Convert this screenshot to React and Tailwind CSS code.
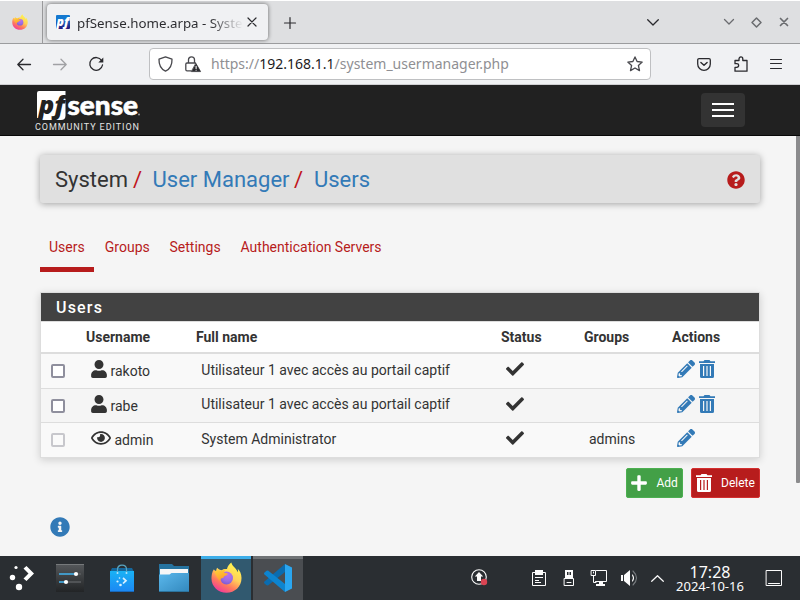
import React from "react";
import {
  FaUser,
  FaRegEye,
  FaCheck,
  FaPencilAlt,
  FaPlus,
  FaInfoCircle,
  FaQuestionCircle,
} from "react-icons/fa";

function Svg({ w = 16, h = 16, vb, className = "", children }) {
  return (
    <svg
      width={w}
      height={h}
      viewBox={vb || `0 0 ${w} ${h}`}
      className={`block shrink-0 overflow-visible ${className}`}
      fill="none"
      stroke="currentColor"
      strokeLinecap="round"
      strokeLinejoin="round"
    >
      {children}
    </svg>
  );
}

function Trash() {
  return (
    <Svg w={16} h={18}>
      <path
        fillRule="evenodd"
        stroke="none"
        fill="currentColor"
        d="M0 1.200H4.500L5.500 0H10.500L11.500 1.200H16V3H0ZM1 4H15V16.500Q15 18 13.500 18H2.500Q1 18 1 16.500ZM4 6V16H5.200V6ZM7.400 6V16H8.600V6ZM10.800 6V16H12V6Z"
      />
    </Svg>
  );
}

function Firefox({ size, id }) {
  return (
    <svg width={size} height={size} viewBox="0 0 32 32" className="block shrink-0">
      <defs>
        <linearGradient id={`${id}a`} x1="0.8" y1="0.1" x2="0.3" y2="1">
          <stop offset="0" stopColor="#fff44f" />
          <stop offset="0.4" stopColor="#ffd05a" />
          <stop offset="0.7" stopColor="#ff7a5c" />
          <stop offset="1" stopColor="#f0389c" />
        </linearGradient>
        <radialGradient id={`${id}b`} cx="0.6" cy="0.25" r="0.8">
          <stop offset="0" stopColor="#b972ee" />
          <stop offset="0.6" stopColor="#9a6ce4" />
          <stop offset="1" stopColor="#7a58d0" />
        </radialGradient>
        <linearGradient id={`${id}c`} x1="0.2" y1="0" x2="0.6" y2="1">
          <stop offset="0" stopColor="#ffcf3a" />
          <stop offset="1" stopColor="#ff9a2a" />
        </linearGradient>
      </defs>
      <path
        d="M21 .5C19 2 17 4.500 16.500 7.300C14 7 12.500 7.500 11 8.500C9.500 8.500 7.500 7.500 6.500 6C5.500 7 5.300 8.300 5.500 9.700C4.500 9.500 3.500 8.500 3 7.500C1 10 .5 14 .5 17C.5 25.500 7.500 31.700 16 31.700C24.500 31.700 31.500 25.500 31.500 16.500C31.500 12 29.500 8.500 27.500 7C28 8.500 28 9.500 27.700 10.500C26 6 22 5 21 .5Z"
        fill={`url(#${id}a)`}
      />
      <circle cx="16" cy="16.500" r="6.700" fill={`url(#${id}b)`} />
      <path
        d="M3.500 9.700C7 8.200 9.500 8.300 11 9.300C12 8 14 7.500 15.500 7.800C14 8.700 13.500 10 13.700 11.200C14.500 11.700 16.500 11.700 17.300 12C17 13.500 15 13.800 14 14.500C13 15.300 13.300 16.300 12 16.500C10.500 16.500 9.500 17.500 9.800 19.500C7 18 5 13.500 3.500 9.700Z"
        fill={`url(#${id}c)`}
      />
    </svg>
  );
}

function Vscode() {
  return (
    <svg width="28" height="28" viewBox="0 0 28 28" className="block shrink-0">
      <path d="M21 0V8L4 21.500 2.500 21.200 0 19 .2 17.800Z" fill="#0a6cb0" />
      <path d="M21 28V20L4 6.500 2.500 6.800 0 9 .2 10.200Z" fill="#0d84cf" />
      <path d="M21 0V28L28 24.500V3.500Z" fill="#2aa6f0" />
    </svg>
  );
}

function TabStrip() {
  return (
    <div className="flex h-[44px] items-stretch border-t border-b border-t-white border-b-[#9b9c9e] bg-[#dedfe1] text-[#2a2a2e]">
      <div className="flex w-[43px] items-center border-r border-[#9a9a9c] pl-[12px]">
        <Firefox size={16} id="s" />
      </div>
      <div className="mt-[3px] ml-[4px] flex h-[36px] w-[221px] items-center rounded-[4px] bg-[#f0f1f3] pl-[9px] shadow-[0_0_4px_rgba(0,0,0,0.55)]">
        <svg width="14" height="14" viewBox="0 0 14 14" className="block shrink-0">
          <defs>
            <linearGradient id="fav" x1="0" y1="0" x2="0" y2="1">
              <stop offset="0.3" stopColor="#1579d0" />
              <stop offset="1" stopColor="#241478" />
            </linearGradient>
          </defs>
          <rect width="14" height="14" rx="1" fill="url(#fav)" />
          <text x="0.500" y="10.500" fontFamily="Open Sans" fontWeight="800" fontStyle="italic" fontSize="12" textLength="12.500" lengthAdjust="spacingAndGlyphs" fill="#fff">pf</text>
        </svg>
        <span className="mt-[3px] ml-[7px] w-[166px] overflow-hidden bg-gradient-to-r from-[#2a2a2e] from-80% to-transparent to-100% bg-clip-text font-['Noto_Sans',sans-serif] text-[13.300px] whitespace-nowrap text-transparent">
          pfSense.home.arpa - Syste
        </span>
        <Svg w={10} h={10} className="ml-[4px]">
          <path d="M1 1 9 9M9 1 1 9" strokeWidth="1.200" />
        </Svg>
      </div>
      <Svg w={12} h={12} className="mt-[16px] ml-[15.500px]">
        <path d="M6 .5V11.500M.5 6H11.500" strokeWidth="1.200" />
      </Svg>
      <div className="ml-auto flex items-center pr-[10px]">
        <Svg w={12} h={7} className="mr-[65px]">
          <path d="M.7.7 6 6 11.300.7" strokeWidth="1.300" />
        </Svg>
        <Svg w={10} h={6} className="mr-[17px] text-[#6a6c6f]">
          <path d="M.5.5 5 5 9.500.5" strokeWidth="1.300" />
        </Svg>
        <Svg w={11} h={11} className="mr-[17px] text-[#6a6c6f]">
          <path d="M5.500 1 10 5.500 5.500 10 1 5.500Z" strokeWidth="1.500" />
        </Svg>
        <Svg w={10} h={10} className="mr-[1px] text-[#6a6c6f]">
          <path d="M1.500 1.500 8.500 8.500M8.500 1.500 1.500 8.500" strokeWidth="1.700" />
        </Svg>
      </div>
    </div>
  );
}

function Toolbar() {
  return (
    <div className="flex h-[41px] items-center border-b border-[#cfcfd2] bg-[#f0f1f3] pl-[17px] text-[#2a2a2e]">
      <Svg w={14} h={12}>
        <path d="M13.500 6.500H.8M6 1.300.8 6.500 6 11.700" strokeWidth="1.300" />
      </Svg>
      <Svg w={14} h={12} className="ml-[22px] text-[#a0a1a4]">
        <path d="M.5 6.500H13.200M8 1.300 13.200 6.500 8 11.700" strokeWidth="1.300" />
      </Svg>
      <Svg w={15} h={15} className="mt-px ml-[22px]">
        <path d="M12.600 3.500A6.400 6.400 0 1 0 13.500 8" strokeWidth="1.300" />
        <path d="M14.300.5V5.500H9.300Z" fill="currentColor" stroke="none" />
      </Svg>
      <div className="ml-[45px] flex h-[32px] w-[502px] items-center rounded-[4px] border border-[#bfc0c2] bg-white pl-[7.500px]">
        <Svg w={15} h={16} className="text-[#48484d]">
          <path
            d="M7.500.8 14 3.200C14.200 8.500 12 13 7.500 15.200 3 13 .8 8.500 1 3.200Z"
            strokeWidth="1.300"
          />
        </Svg>
        <Svg w={16} h={16} className="ml-[12px] text-[#48484d]">
          <path d="M3.500 7V3.800A3 3 0 0 1 9.500 3.800V7M6 14.800H2A1.200 1.200 0 0 1 .8 13.600V8.200A1.200 1.200 0 0 1 2 7H10.500" strokeWidth="1.300" />
          <path d="M11 7.600 15.600 15.600H6.600Z" fill="#2a2a2e" stroke="#2a2a2e" strokeWidth=".7" />
          <path d="M11.100 10.200V12.600M11.100 14.200V14.300" stroke="#fff" strokeWidth="1.100" />
        </Svg>
        <span className="ml-[10.500px] pb-[2px] font-['Noto_Sans',sans-serif] text-[14px] whitespace-nowrap text-[#8f8f93]">
          https://<span className="text-[#1c1b22]">192.168.1.1</span>/system_usermanager.php
        </span>
        <Svg w={16} h={16} className="mr-[7px] ml-auto text-[#48484d]">
          <path
            d="M8 .9 10.100 5.500 15.200 6.100 11.400 9.500 12.500 14.600 8 12 3.500 14.600 4.600 9.500.8 6.100 5.900 5.500Z"
            strokeWidth="1.300"
          />
        </Svg>
      </div>
      <Svg w={14} h={13} className="ml-[46px]">
        <path d="M2 .7H12A1.300 1.300 0 0 1 13.300 2V6A6.300 6.300 0 0 1 .7 6V2A1.300 1.300 0 0 1 2 .7Z" strokeWidth="1.300" />
        <path d="M3.900 4.400 7 7.300 10.100 4.400" strokeWidth="1.400" />
      </Svg>
      <Svg w={14} h={16} className="ml-[22.500px]">
        <path
          d="M1 4.500H5V3C5 .2 8.800.2 8.800 3V4.500H13V15.200H1V11.300H2.700C5.300 11.300 5.300 7.700 2.700 7.700H1Z"
          strokeWidth="1.300"
        />
      </Svg>
      <Svg w={12} h={10} className="ml-[22.500px]">
        <path d="M.5.5H11.500M.5 4.500H11.500M.5 9.500H11.500" strokeWidth="1.100" />
      </Svg>
    </div>
  );
}

function SiteHeader() {
  return (
    <header className="flex h-[51px] items-start justify-between border-b border-[#080808] bg-[#212121] pr-[55px] pl-[35px]">
      <div className="pt-[5px]">
        <svg width="108" height="32" viewBox="0 0 108 32" className="block">
          <path d="M4 1H30.500V25.500Q30.500 30 26 30H5V28H2V3Q2 1 4 1Z" fill="#fff" />
          <text x="3.500" y="23.500" fontFamily="Open Sans" fontWeight="800" fontStyle="italic" fontSize="25" textLength="26.500" lengthAdjust="spacingAndGlyphs" fill="#212121">pf</text>
          <text x="32.500" y="24.500" fontFamily="Lato" fontWeight="900" fontSize="27" textLength="70.500" lengthAdjust="spacingAndGlyphs" fill="#fff" stroke="#fff" strokeWidth=".6">sense</text>
          <circle cx="104" cy="24.500" r="1" fill="#999" />
        </svg>
        <div className="font-[Roboto,sans-serif] text-[9px] leading-[10px] tracking-[0.920px] whitespace-nowrap text-[#e4e4e4]">
          COMMUNITY EDITION
        </div>
      </div>
      <button className="mt-[8px] flex h-[34px] w-[44px] flex-col items-center justify-center gap-[4px] rounded-[4px] bg-[#333333]">
        <span className="h-[2px] w-[22px] bg-white" />
        <span className="h-[2px] w-[22px] bg-white" />
        <span className="h-[2px] w-[22px] bg-white" />
      </button>
    </header>
  );
}

const users = [
  { name: "rakoto", full: "Utilisateur 1 avec accès au portail captif", groups: "" },
  { name: "rabe", full: "Utilisateur 1 avec accès au portail captif", groups: "" },
  { name: "admin", full: "System Administrator", groups: "admins", system: true },
];

const COLS = "grid grid-cols-[45px_110px_305px_83px_88px_1fr]";

const ROW_STYLES = [
  "h-[34px]",
  "h-[34px] border-t border-[#dddddd] bg-[#f5f5f5]",
  "h-[35px] border-t border-[#dddddd]",
];

function UserTable() {
  return (
    <section className="mt-[20px] h-[166px] border border-[#dddddd] bg-[#f9f9f9] shadow-[0_2px_8px_rgba(0,0,0,0.16)]">
      <h2 className="h-[28px] bg-[#424242] pl-[15px] text-[16px] leading-[29px] font-medium tracking-[1.200px] text-white">
        Users
      </h2>
      <div className={`${COLS} h-[33px] border-t border-b-2 border-[#dddddd] bg-white text-[14px] leading-[30px] font-bold`}>
        <span />
        <span>Username</span>
        <span>Full name</span>
        <span>Status</span>
        <span>Groups</span>
        <span>Actions</span>
      </div>
      {users.map((u, i) => (
        <div key={u.name} className={`${COLS} text-[14px] ${ROW_STYLES[i]}`}>
          <span className="pt-[10px] pl-[10px]">
            <span className={`block h-[14px] w-[14px] rounded-[2px] border-2 ${u.system ? "border-[#c7c7cc] bg-[#fafafa]" : "border-[#8f8f9d] bg-white"}`} />
          </span>
          <span className="flex items-start pl-[5px]">
            {u.system ? (
              <FaRegEye className="mt-[6px] h-[18px] w-[20px]" />
            ) : (
              <FaUser className="mt-[6px] h-[18px] w-[16px]" />
            )}
            <span className="ml-[3.500px] leading-[34px]">{u.name}</span>
          </span>
          <span className={`pl-[5.300px] ${i === 1 ? "leading-[30px]" : "leading-[32px]"}`}>{u.full}</span>
          <span className="pt-[6px] pl-[5px]">
            <FaCheck className="h-[18px] w-[18px]" />
          </span>
          <span className="pl-[5px] leading-[32px]">{u.groups}</span>
          <span className="flex gap-[4px] pt-[6px] pl-[5px] text-[#337ab7]">
            <FaPencilAlt className="h-[18px] w-[18px]" />
            {!u.system && <Trash />}
          </span>
        </div>
      ))}
    </section>
  );
}

function Page() {
  return (
    <div className="flex h-[420px] bg-[#f5f5f5] font-[Roboto,sans-serif] text-[#333333]">
      <main className="ml-[40px] w-[720px] pt-[19px]">
        <div className="flex h-[48px] items-center rounded-[3px] bg-[#e0e0e0] pr-[15px] pl-[15px] text-[22px] shadow-[0_1px_7px_rgba(0,0,0,0.35)]">
          <span>System</span>
          <span className="ml-[5px] text-[#c1141b]">/</span>
          <span className="ml-[10.500px] text-[#337ab7]">User Manager</span>
          <span className="ml-[4.500px] text-[#c1141b]">/</span>
          <span className="ml-[10.800px] text-[#337ab7]">Users</span>
          <FaQuestionCircle className="mt-[1px] ml-auto h-[18px] w-[18px] text-[#b71c1c]" />
        </div>
        <nav className="mt-[26px] flex h-[43px] text-[14px] leading-[36px] text-[#b71c1c]">
          <span className="w-[54px] border-b-[5px] border-[#b71c1c] pl-[9px]">Users</span>
          <span className="ml-[10.800px]">Groups</span>
          <span className="ml-[19.800px]">Settings</span>
          <span className="ml-[19.900px]">Authentication Servers</span>
        </nav>
        <UserTable />
        <div className="mt-[10px] flex justify-end gap-[8px] text-[12px] text-white">
          <button className="flex h-[30px] w-[57px] items-center rounded-[2px] border border-[#4caf50] bg-[#43a047] pl-[4px]">
            <FaPlus className="h-[18px] w-[16px]" />
            <span className="ml-[9.500px]">Add</span>
          </button>
          <button className="flex h-[30px] w-[69px] items-center rounded-[2px] border border-[#d32f2f] bg-[#b71c1c] pl-[4px]">
            <Trash />
            <span className="ml-[9px]">Delete</span>
          </button>
        </div>
        <FaInfoCircle className="mt-[19px] ml-[10px] h-[20px] w-[20px] text-[#337ab7]" />
      </main>
      <div className="ml-auto h-[347px] w-[4px] rounded-b-[1px] bg-[#8b8b8d]" />
    </div>
  );
}

function Taskbar() {
  return (
    <footer className="flex h-[44px] items-stretch bg-[#2a2e32] text-[#fcfcfc]">
      <div className="flex w-[44px] items-center pl-[9px]">
        <svg width="26" height="26" viewBox="0 0 26 26" className="block">
          <circle cx="7" cy="2.500" r="1.600" fill="#fff" />
          <circle cx="3.500" cy="12.500" r="2.700" fill="#fff" />
          <circle cx="10" cy="22" r="3.200" fill="#fff" />
          <path d="M14.500 3.500 17.500 1 25 8.500 17.500 16 14.500 13.500 19.500 8.500Z" fill="#fff" />
        </svg>
      </div>
      <div className="flex w-[52px] items-center pl-[12px]">
        <svg width="28" height="28" viewBox="0 0 28 28" className="block">
          <defs>
            <linearGradient id="set" x1="0" y1="0" x2="0" y2="1">
              <stop offset="0" stopColor="#55585b" />
              <stop offset="1" stopColor="#222426" />
            </linearGradient>
          </defs>
          <rect width="28" height="28" fill="url(#set)" />
          <path d="M0 .5H28" stroke="#76797b" />
          <path d="M3 10H25M3 18H25" stroke="#5b5d60" strokeWidth="1.600" />
          <path d="M3 10H20M3 18H10" stroke="#3daee9" strokeWidth="1.600" />
          <circle cx="20" cy="10" r="2.100" fill="#fff" />
          <circle cx="10" cy="18" r="2.100" fill="#fff" />
        </svg>
      </div>
      <div className="flex w-[52px] items-center pl-[14px]">
        <svg width="24" height="28" viewBox="0 0 24 28" className="block">
          <defs>
            <linearGradient id="bag" x1="0" y1="0" x2="0" y2="1">
              <stop offset="0" stopColor="#19b2f5" />
              <stop offset="1" stopColor="#1c87f4" />
            </linearGradient>
          </defs>
          <path d="M2 4H22L24 8H0Z" fill="#15679c" />
          <rect y="7" width="24" height="21" fill="url(#bag)" />
          <path d="M0 27.500H24" stroke="#1868bb" />
          <path d="M7.500 8V5.500C7.500-.3 16.500-.3 16.500 5.500V8" fill="none" stroke="#58a4c0" strokeWidth="1.200" />
          <circle cx="7.500" cy="9" r="1" fill="#b4e5fc" />
          <circle cx="16.500" cy="9" r="1" fill="#b4e5fc" />
          <circle cx="9.500" cy="14" r=".8" fill="#d9f0ff" />
          <circle cx="7.500" cy="17.500" r="1.100" fill="#d9f0ff" />
          <circle cx="10.500" cy="21" r="1.300" fill="#d9f0ff" />
          <path d="M13 14 16 16.700 13 19.500" stroke="#d9f0ff" strokeWidth="1.700" fill="none" />
        </svg>
      </div>
      <div className="flex w-[53px] items-center pl-[11px]">
        <svg width="30" height="28" viewBox="0 0 30 28" className="block">
          <defs>
            <linearGradient id="fold" x1="0" y1="0" x2="1" y2="1">
              <stop offset="0" stopColor="#5bb8ec" />
              <stop offset="1" stopColor="#3288bd" />
            </linearGradient>
          </defs>
          <path d="M0 0H13L15 2H30V14H0Z" fill="#26739f" />
          <rect x="1" y="5" width="28" height="7" fill="#f7f7f7" />
          <path d="M0 10.500H10.500L12.500 9H30V28H0Z" fill="url(#fold)" />
          <path d="M0 27.500H30" stroke="#2c739d" />
        </svg>
      </div>
      <div className="flex w-[50px] items-center justify-center border-t-[3px] border-[#3daee9] bg-[#31596f] pb-[4px]">
        <Firefox size={31} id="l" />
      </div>
      <div className="ml-[2px] flex w-[50px] items-center justify-center border-t-[3px] border-[#707376] bg-[#4a4d51] pb-[3px]">
        <Vscode />
      </div>
      <div className="ml-auto flex items-center">
        <Svg w={18} h={18} className="mr-[43px]">
          <circle cx="8" cy="8" r="7.300" strokeWidth="1.100" />
          <path d="M8 3 12.200 7.500H10V12H6V7.500H3.800Z" fill="currentColor" stroke="none" />
          <circle cx="13" cy="13" r="3.200" fill="#da4453" stroke="none" />
        </Svg>
        <Svg w={14} h={16} className="mr-[18px]">
          <path d="M.5 2.500H13.500V15.500H.5ZM3 7.500H11M3 10.500H7M3 12.500H9" strokeLinecap="butt" />
          <path d="M3 0H11V5H3Z" fill="currentColor" stroke="none" />
        </Svg>
        <Svg w={10} h={16} className="mr-[17px]">
          <path d="M1 0H9V8H1Z" fill="currentColor" stroke="none" />
          <path d="M3 2H4.500V5H3ZM5.500 2H7V5H5.500Z" fill="#2a2e32" stroke="none" />
          <path d="M.5 8.500H9.500V15.500H.5ZM3 12.500H7" />
        </Svg>
        <Svg w={16} h={16} className="mr-[14px]">
          <path d="M5.500.5H15.500V11.500H4.500M.5.500H4.500V5.500H.5ZM2.500 5.500V12.500H5M2.500 2V3" />
          <path d="M8 12H12V14H14V16H5V14H8Z" fill="currentColor" stroke="none" />
        </Svg>
        <Svg w={17} h={18} className="mr-[13px]">
          <path d="M0 6H2V12H0ZM3 6 9 1V17L3 12Z" fill="currentColor" stroke="none" />
          <path d="M11.500 6Q13.500 9 11.500 12" strokeWidth="1.100" />
          <path d="M12 2Q19 9 12 16" stroke="#777b7f" strokeWidth="1.100" />
        </Svg>
        <Svg w={13} h={7} className="mr-[11px]">
          <path d="M.7 6.300 6.500.7 12.300 6.300" strokeWidth="1.200" />
        </Svg>
        <div className="mr-[22px] w-[69px] pt-[2px] pl-px text-center font-['Noto_Sans',sans-serif] whitespace-nowrap">
          <div className="text-[16px] leading-[15px]">17:28</div>
          <div className="text-[13px] leading-[13px]">2024-10-16</div>
        </div>
        <Svg w={16} h={16} className="mr-[18px]">
          <path d="M.5.5H15.500V15.500H.5ZM2.500 13.500H13.500" />
        </Svg>
      </div>
    </footer>
  );
}

export default function App() {
  return (
    <div className="flex h-[600px] w-[800px] flex-col overflow-hidden bg-[#f5f5f5]">
      <TabStrip />
      <Toolbar />
      <SiteHeader />
      <Page />
      <Taskbar />
    </div>
  );
}
